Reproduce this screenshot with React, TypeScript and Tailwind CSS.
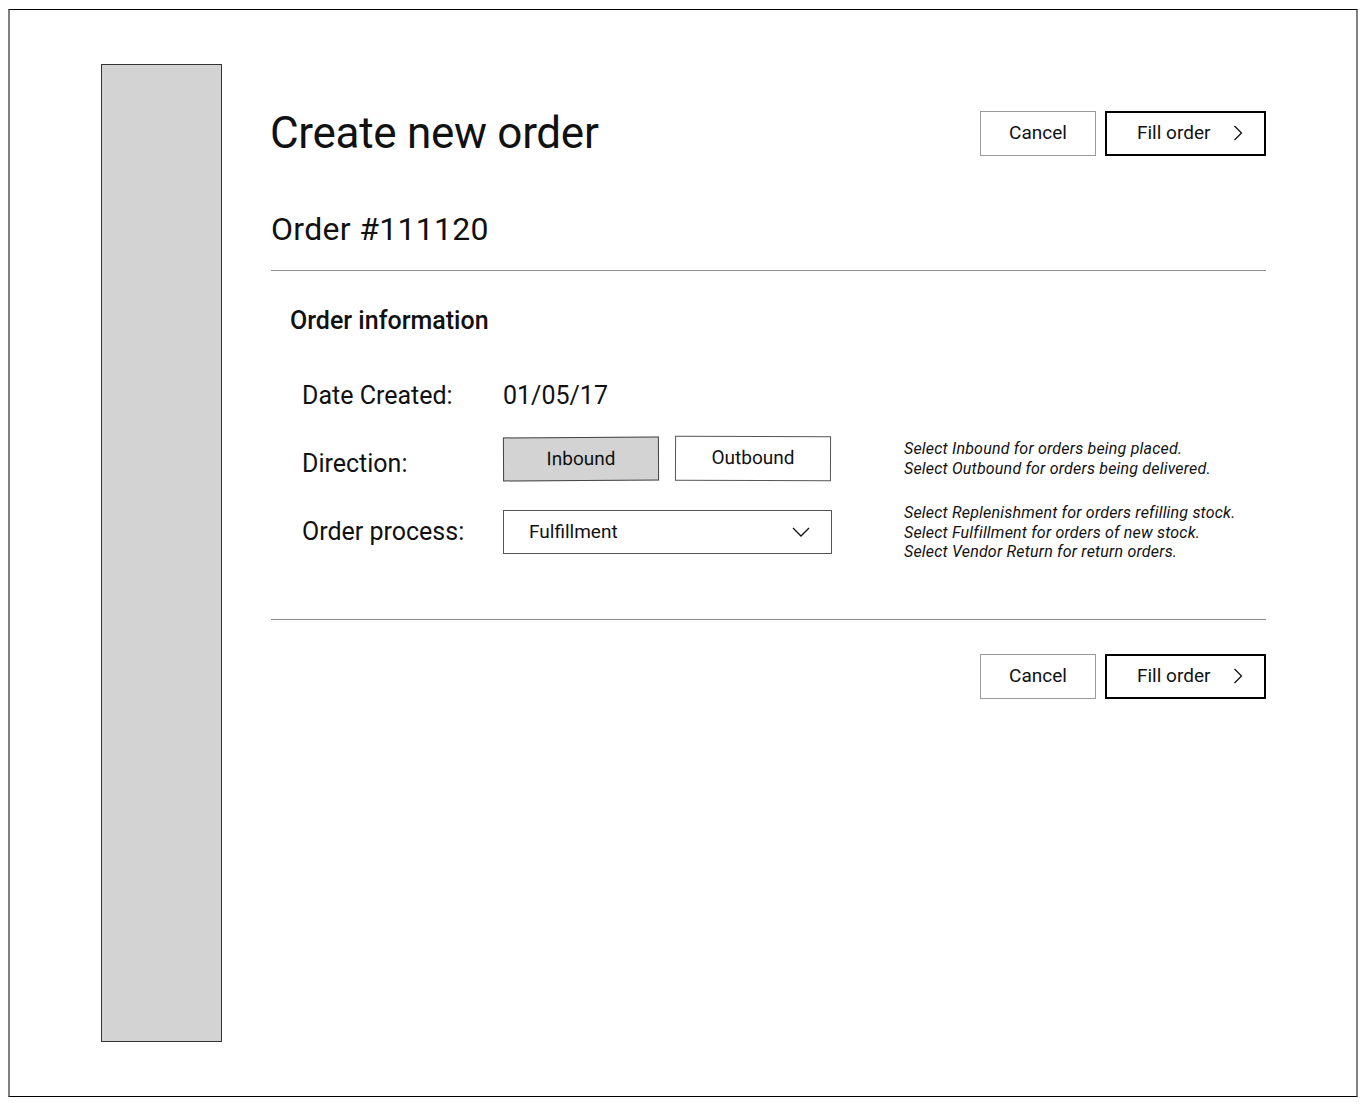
import React from "react";

function ChevronRight() {
  return (
    <svg width="10" height="16" viewBox="0 0 10 16" fill="none" className="shrink-0">
      <path d="M1.5 1 L8.5 8 L1.5 15" stroke="#111" strokeWidth="1.3" />
    </svg>
  );
}

function ChevronDown() {
  return (
    <svg width="18" height="10" viewBox="0 0 18 10" fill="none" className="shrink-0">
      <path d="M1 1 L9 9 L17 1" stroke="#111" strokeWidth="1.3" />
    </svg>
  );
}

function Actions() {
  return (
    <div className="flex items-center gap-[9px]">
      <button className="w-[116px] h-[45px] border border-[#9a9a9a] bg-white text-[19px] text-[#111] flex items-center justify-center">
        Cancel
      </button>
      <button className="w-[161px] h-[45px] border-2 border-black bg-white text-[19px] text-[#111] flex items-center pl-[30px] pr-[21px] justify-between">
        <span>Fill order</span>
        <ChevronRight />
      </button>
    </div>
  );
}

export default function App() {
  return (
    <div className="min-h-screen bg-white font-['Roboto','Liberation_Sans',sans-serif] text-[#111]">
      <div className="ml-[8px] mt-[9px] w-[1350px] h-[1088px] border-y border-y-black border-x-2 border-x-[#808080] flex items-start pt-[54px] pl-[91px]">
        {/* sidebar */}
        <div className="w-[121px] h-[978px] border border-[#333] bg-[#d3d3d3] shrink-0" />

        {/* main */}
        <div className="ml-[49px] w-[995px] pt-[43px]">
          <div className="flex items-center justify-between">
            <h1 className="text-[44px] leading-[52px] tracking-[-0.3px] -ml-px">Create new order</h1>
            <Actions />
          </div>

          <h2 className="mt-[52px] text-[32px] leading-[36px] tracking-[0.3px]">Order #111120</h2>

          <div className="mt-[23px] h-px bg-[#8c8c8c]" />

          <h3 className="mt-[37px] pl-[19px] text-[25px] leading-[26px] font-medium">Order information</h3>

          <div className="pl-[31px]">
            <div className="mt-[48px] flex text-[25px] leading-[28px]">
              <div className="w-[201px]">Date Created:</div>
              <div>01/05/17</div>
            </div>

            <div className="mt-[26px] flex items-center">
              <div className="w-[201px] self-start pt-[14px] text-[25px] leading-[28px]">Direction:</div>
              <div className="flex items-center gap-[16px]">
                <button className="w-[156px] h-[44px] border border-[#444] bg-[#d3d3d3] text-[19px] flex items-center justify-center -rotate-[0.3deg]">
                  Inbound
                </button>
                <button className="w-[156px] h-[45px] border border-[#555] bg-white text-[19px] flex items-center justify-center rotate-[0.2deg]">
                  Outbound
                </button>
              </div>
              <div className="ml-[73px] text-[16px] leading-[19.5px] italic tracking-[0.2px]">
                <p>Select Inbound for orders being placed.</p>
                <p>Select Outbound for orders being delivered.</p>
              </div>
            </div>

            <div className="mt-[22px] flex items-center">
              <div className="w-[201px] text-[25px] leading-[28px]">Order process:</div>
              <div className="w-[329px] h-[44px] border border-[#555] bg-white flex items-center justify-between pl-[25px] pr-[21px] text-[19px]">
                <span>Fulfillment</span>
                <ChevronDown />
              </div>
              <div className="ml-[72px] text-[16px] leading-[19.5px] italic tracking-[0.2px]">
                <p>Select Replenishment for orders refilling stock.</p>
                <p>Select Fulfillment for orders of new stock.</p>
                <p>Select Vendor Return for return orders.</p>
              </div>
            </div>
          </div>

          <div className="mt-[57px] h-px bg-[#8c8c8c]" />

          <div className="mt-[34px] flex justify-end">
            <Actions />
          </div>
        </div>
      </div>
    </div>
  );
}
